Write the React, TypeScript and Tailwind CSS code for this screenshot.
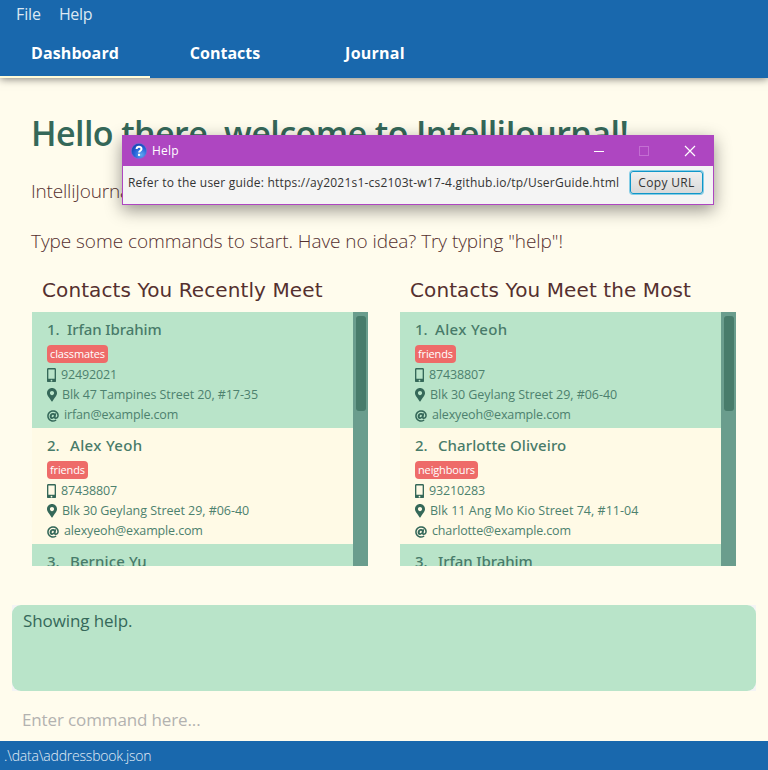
import { FaAt, FaMapMarkerAlt, FaMobileAlt } from "react-icons/fa";

type Contact = {
  index: number;
  name: string;
  nameTracking: string;
  tag?: string;
  phone?: string;
  address?: string;
  addressTracking?: string;
  email?: string;
};

const recent: Contact[] = [
  { index: 1, name: "Irfan Ibrahim", nameTracking: "tracking-[-0.1px]", tag: "classmates", phone: "92492021", address: "Blk 47 Tampines Street 20, #17-35", addressTracking: "tracking-[-0.07px]", email: "irfan@example.com" },
  { index: 2, name: "Alex Yeoh", nameTracking: "tracking-[0.35px]", tag: "friends", phone: "87438807", address: "Blk 30 Geylang Street 29, #06-40", addressTracking: "tracking-[-0.04px]", email: "alexyeoh@example.com" },
  { index: 3, name: "Bernice Yu", nameTracking: "tracking-[0.1px]" },
];

const frequent: Contact[] = [
  { index: 1, name: "Alex Yeoh", nameTracking: "tracking-[0.35px]", tag: "friends", phone: "87438807", address: "Blk 30 Geylang Street 29, #06-40", addressTracking: "tracking-[-0.04px]", email: "alexyeoh@example.com" },
  { index: 2, name: "Charlotte Oliveiro", nameTracking: "tracking-[0.09px]", tag: "neighbours", phone: "93210283", address: "Blk 11 Ang Mo Kio Street 74, #11-04", addressTracking: "tracking-[0.03px]", email: "charlotte@example.com" },
  { index: 3, name: "Irfan Ibrahim", nameTracking: "tracking-[-0.1px]" },
];

function ContactRow({ contact }: { contact: Contact }) {
  const { index, name, nameTracking, tag, phone, address, addressTracking, email } = contact;
  return (
    <li
      className={`h-[116px] shrink-0 pt-[7px] pl-[15px] whitespace-nowrap ${
        index % 2 ? "bg-[#b9e4c9]" : "bg-[#fffae6]"
      }`}
    >
      <div className="flex h-5 items-center text-[15px] leading-5 font-medium text-[#487b69] font-['Noto_Sans',sans-serif]">
        <span className={index === 1 ? "w-5" : "w-[23px]"}>{index}.</span>
        <span className={nameTracking}>{name}</span>
      </div>
      {tag && (
        <div className="mt-[6px] mb-[2px] flex h-[18px]">
          <span className="rounded-[4px] bg-[#ee6b69] px-[3px] text-[11px] leading-[17.5px] tracking-[-0.14px] text-white">
            {tag}
          </span>
        </div>
      )}
      {tag && (
        <div className="text-[12.5px] leading-5 text-[#4d816e]">
          <div className="flex h-5 items-center gap-[5px] tracking-[-0.15px]">
            <FaMobileAlt className="h-[14.5px] w-[9px] text-[#356859]" />
            {phone}
          </div>
          <div className="flex h-5 items-center gap-[5px]">
            <FaMapMarkerAlt className="h-[13.5px] w-[10px] text-[#356859]" />
            <span className={addressTracking}>{address}</span>
          </div>
          <div className="flex h-5 items-center gap-[5px] tracking-[-0.14px]">
            <FaAt className="mt-px h-3 w-3 text-[#356859]" />
            {email}
          </div>
        </div>
      )}
    </li>
  );
}

function ContactPanel({ title, contacts }: { title: string; contacts: Contact[] }) {
  return (
    <section className="w-[336px]">
      <h2 className="h-6 pl-[10px] text-[20px] leading-6 tracking-[0.1px] whitespace-nowrap text-[#55302f] font-['DejaVu_Sans',sans-serif]">
        {title}
      </h2>
      <div className="mt-[10px] flex h-[254px] overflow-hidden">
        <ul className="flex flex-1 flex-col overflow-hidden">
          {contacts.map((c) => (
            <ContactRow key={c.index} contact={c} />
          ))}
        </ul>
        <div className="w-[15px] bg-[#6a9d8d] pt-1 pr-[2px] pl-[3px]">
          <div className="h-[95px] rounded-[3px] bg-[#487c6b]" />
        </div>
      </div>
    </section>
  );
}

function HelpWindow() {
  return (
    <div className="absolute top-[135px] left-[122px] flex h-[70px] w-[592px] flex-col border border-[#ae46c1] bg-[#f4f4f4] shadow-[0_5px_16px_rgba(0,0,0,0.42)]">
      <div className="flex h-[30px] items-center bg-[#ae46c1] pl-2 text-white">
        <svg className="size-4" viewBox="0 0 16 16">
          <defs>
            <radialGradient id="orb" cx="0.65" cy="0.75" r="0.75">
              <stop offset="0" stopColor="#5fa8f2" />
              <stop offset="0.6" stopColor="#2663d8" />
              <stop offset="1" stopColor="#1b44b4" />
            </radialGradient>
          </defs>
          <circle cx="8" cy="8" r="7.6" fill="url(#orb)" stroke="#6d7fd6" strokeWidth="0.5" />
          <path d="M5.6 6.1C5.6 2.9 10.5 3 10.5 6c0 1.8-2.4 1.8-2.4 3.6" fill="none" stroke="#fff" strokeWidth="2" />
          <rect x="7" y="10.8" width="2.1" height="2.1" fill="#fff" />
        </svg>
        <span className="ml-[5px] text-[12px] leading-[30px] tracking-[0.2px]">Help</span>
        <div className="ml-auto flex items-center pr-[18px]">
          <svg className="size-[10px]" viewBox="0 0 10 10" shapeRendering="crispEdges">
            <path d="M0 5.5h10" stroke="#fff" />
          </svg>
          <svg className="ml-[35px] size-[10px]" viewBox="0 0 10 10" shapeRendering="crispEdges">
            <path d="M.5.5h9v9h-9z" fill="none" stroke="#c36fd2" />
          </svg>
          <svg className="ml-9 size-[10px] overflow-visible" viewBox="0 0 10 10">
            <path d="M0 0l10 10M10 0L0 10" stroke="#fff" strokeWidth="1.2" />
          </svg>
        </div>
      </div>
      <div className="flex h-[33px] items-center pl-[5px] text-[12px] text-[#333] whitespace-nowrap">
        <span className="w-[502px] tracking-[0.213px]">
          Refer to the user guide: https://ay2021s1-cs2103t-w17-4.github.io/tp/UserGuide.html
        </span>
        <button className="h-[23px] w-[73px] rounded-[3px] border border-[#0f96c9] bg-linear-to-b from-[#efefef] to-[#d9d9d9] text-center text-[12px] leading-5 tracking-[0.35px] text-[#333] shadow-[0_0_0_1px_rgba(3,158,211,0.45)]">
          Copy URL
        </button>
      </div>
    </div>
  );
}

export default function App() {
  return (
    <div className="relative flex h-[770px] w-[768px] flex-col overflow-hidden bg-[#fffced] font-['Open_Sans','Noto_Sans',sans-serif]">
      <header className="h-[78px] shrink-0 bg-[#1968ad] shadow-[0_1px_8px_rgba(0,0,0,0.5)]">
        <nav className="flex h-7 gap-[18px] pl-4 text-[16px] leading-7 text-[#dce8f3]">
          <span className="tracking-[-0.1px]">File</span>
          <span className="tracking-[-0.35px]">Help</span>
        </nav>
        <nav className="flex h-[50px] text-center text-[16px] leading-[46px] font-bold text-white">
          <span className="w-[150px] border-b-2 border-[#fffbd8] pt-[2px] tracking-[0.1px]">Dashboard</span>
          <span className="w-[150px] pt-[2px]">Contacts</span>
          <span className="w-[150px] pt-[2px] tracking-[0.25px]">Journal</span>
        </nav>
      </header>

      <main className="flex flex-1 flex-col pt-8">
        <h1 className="h-[46px] pl-[31px] text-[34px] leading-[46px] font-semibold tracking-[-0.58px] whitespace-nowrap text-[#356859]">
          Hello there, welcome to IntelliJournal!
        </h1>
        <div className="mt-[10px] pl-[31px] text-[19px] leading-[50px] font-light tracking-[-0.06px] text-[#55302f]">
          <p className="h-[50px] tracking-[-0.2px]">IntelliJournal</p>
          <p className="h-[50px]">Type some commands to start. Have no idea? Try typing "help"!</p>
        </div>
        <div className="mt-3 flex gap-8 pl-8">
          <ContactPanel title="Contacts You Recently Meet" contacts={recent} />
          <ContactPanel title="Contacts You Meet the Most" contacts={frequent} />
        </div>
        <div className="mx-3 mt-[39px] h-[86px] bg-[#f4f4f4]">
          <div className="h-full rounded-[9px] bg-[#b9e4c9] pt-[3px] pl-[11px] text-[17px] leading-[26px] tracking-[-0.1px] text-[#356859]">
            Showing help.
          </div>
        </div>
        <div className="pl-[22px] text-[17px] leading-[57px] tracking-[-0.13px] text-[#b3b2b0]">
          Enter command here...
        </div>
      </main>

      <footer className="absolute inset-x-0 bottom-0 h-[29px] bg-[#1968ad] pl-1 text-[14px] leading-[29px] font-light tracking-[-0.2px] text-[#e3edf6]">
        .\data\addressbook.json
      </footer>

      <HelpWindow />
    </div>
  );
}
